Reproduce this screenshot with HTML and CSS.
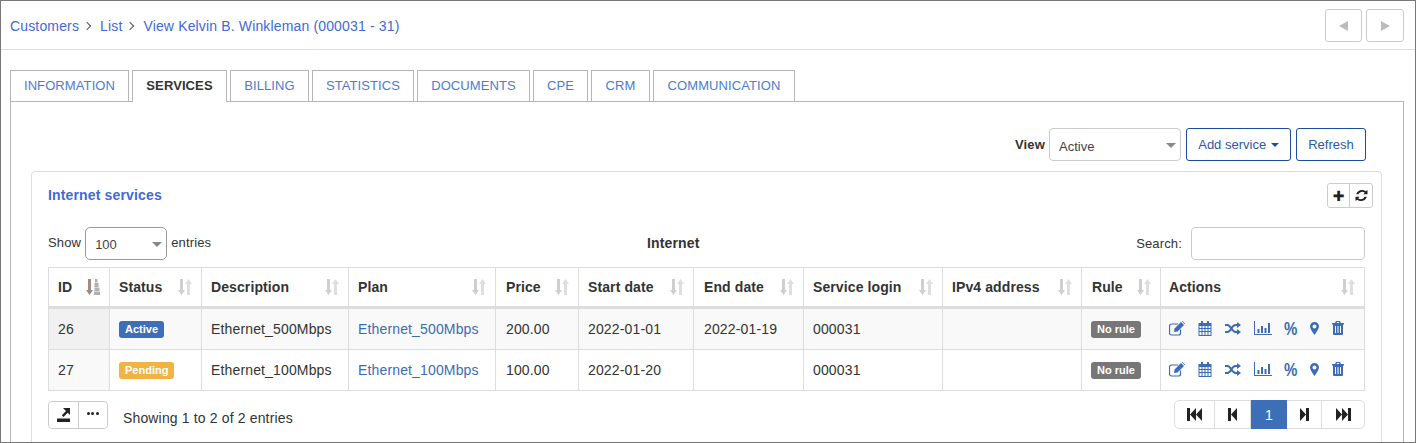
FILE: index.html
```html
<!DOCTYPE html>
<html lang="en">
<head>
	<meta charset="UTF-8">
	<title>View Kelvin B. Winkleman</title>
	<link rel="stylesheet" href="styles.css">
</head>
<body>
<svg class="defs" width="0" height="0">
	<symbol id="i-sort" viewBox="0 0 14 16">
		<path class="sort-a" d="M2 0h3v11h2l-3.500 5-3.500-5h2z"/>
		<path class="sort-b" d="M9 16h3v-11h2l-3.500-5-3.500 5h2z"/>
	</symbol>
	<symbol id="i-sort-id" viewBox="0 0 14 16">
		<path class="sort-c" d="M2 0h3v11h2l-3.500 5-3.500-5h2z"/>
		<path class="sort-d" d="M9 0h2.500v3.500h-2.500zM8.500 4h4v4h-4zM8.500 8.500h5v3.500h-5zM8 12.500h6v3.500h-6z"/>
	</symbol>
	<symbol id="i-edit" viewBox="0 0 16 15">
		<path class="line" d="M11.500 8.500v3.500a2 2 0 0 1-2 2h-7a2 2 0 0 1-2-2v-7a2 2 0 0 1 2-2h6.500"/>
		<path d="M5.500 7.500l6.500-6.500 3 3-6.500 6.500-3.500.5zM12.800.300l.7-.3 2.500 2.500-.3.700z"/>
	</symbol>
	<symbol id="i-cal" viewBox="0 0 14 15">
		<path fill-rule="evenodd" d="M3 0h2v2h4v-2h2v2h2.500v13h-13v-13h2.500zM1.500 5v2h2v-2zM4.500 5v2h2v-2zM7.500 5v2h2v-2zM10.500 5v2h2v-2zM1.500 8v2h2v-2zM4.500 8v2h2v-2zM7.500 8v2h2v-2zM10.500 8v2h2v-2zM1.500 11v3h2v-3zM4.500 11v3h2v-3zM7.500 11v3h2v-3zM10.500 11v3h2v-3z"/>
	</symbol>
	<symbol id="i-random" viewBox="0 0 16 13">
		<path class="cross" d="M0 3h2.500c3.500 0 4 7 8 7h2M0 10h2.500c3.500 0 4-7 8-7h2"/>
		<path d="M12 0l4 3-4 3zM12 7l4 3-4 3z"/>
	</symbol>
	<symbol id="i-chart" viewBox="0 0 18 14">
		<path d="M0 0h1v13h17v1h-18zM3.500 8h2v4h-2zM7 5h2v7h-2zM10.500 7h2v5h-2zM14 2h2v10h-2z"/>
	</symbol>
	<symbol id="i-pin" viewBox="0 0 9 13">
		<path fill-rule="evenodd" d="M4.500 0a4.500 4.500 0 0 1 4.500 4.500c0 2-2.800 6-4.500 8.500-1.700-2.500-4.500-6.500-4.500-8.500a4.500 4.500 0 0 1 4.500-4.500zM4.500 2.500a2 2 0 1 0 0 4 2 2 0 0 0 0-4z"/>
	</symbol>
	<symbol id="i-trash" viewBox="0 0 12 14">
		<path fill-rule="evenodd" d="M4 0h4l1 2h3v1.500h-1v9.500a1 1 0 0 1-1 1h-8a1 1 0 0 1-1-1v-9.500h-1v-1.500h3zM5 1l-.4 1h2.800l-.4-1zM3 5v7h1v-7zM5.500 5v7h1v-7zM8 5v7h1v-7z"/>
	</symbol>
	<symbol id="i-first" viewBox="0 0 15 13">
		<path d="M0 0h3v13h-3zM9 0v13l-6-6.500zM15 0v13l-6-6.500z"/>
	</symbol>
	<symbol id="i-prev" viewBox="0 0 9 13">
		<path d="M0 0h3v13h-3zM9 0v13l-6-6.500z"/>
	</symbol>
	<symbol id="i-next" viewBox="0 0 9 13">
		<path d="M9 0h-3v13h3zM0 0v13l6-6.500z"/>
	</symbol>
	<symbol id="i-last" viewBox="0 0 15 13">
		<path d="M15 0h-3v13h3zM6 0v13l6-6.500zM0 0v13l6-6.500z"/>
	</symbol>
	<symbol id="i-export" viewBox="0 0 13 14">
		<path d="M0 10.500h13v3.500h-13zM6 0h7v7l-2.300-2.300-4.200 4.300-1.700-1.700 4.200-4.300z"/>
	</symbol>
	<symbol id="i-refresh" viewBox="0 0 13 13">
		<path d="M12.500 1v4.200h-4.200l1.500-1.500c-2-1.700-5.300-1-6.300 1.600h-2.300c1-4 6.100-5.800 9.600-3zM.5 12v-4.200h4.200l-1.500 1.500c2 1.700 5.300 1 6.300-1.600h2.300c-1 4-6.100 5.800-9.600 3z"/>
	</symbol>
</svg>

<div class="frame">
	<!-- breadcrumb and prev/next -->
	<div class="topbar">
		<div class="crumbs">
			<a href="#">Customers</a>
			<span class="chev"></span>
			<a href="#">List</a>
			<span class="chev"></span>
			<a href="#">View Kelvin B. Winkleman (000031 - 31)</a>
		</div>
		<div class="pager-btns">
			<button class="nav-btn"><span class="tri-left"></span></button>
			<button class="nav-btn nav-next"><span class="tri-right"></span></button>
		</div>
	</div>

	<ul class="tabs">
		<li class="tab tab-info">Information</li>
		<li class="tab tab-services active">Services</li>
		<li class="tab tab-billing">Billing</li>
		<li class="tab tab-stats">Statistics</li>
		<li class="tab tab-docs">Documents</li>
		<li class="tab tab-cpe">CPE</li>
		<li class="tab tab-crm">CRM</li>
		<li class="tab tab-comm">Communication</li>
	</ul>

	<div class="pane">
		<div class="toolbar">
			<b class="view-label">View</b>
			<div class="select-wrap view-select">
				<select><option>Active</option></select>
			</div>
			<button class="btn btn-add">Add service <span class="caret"></span></button>
			<button class="btn btn-refresh">Refresh</button>
		</div>

		<div class="card">
			<div class="card-head">
				<h3 class="card-title">Internet services</h3>
				<div class="tools">
					<button class="tool-btn"><span class="plus">&#10010;</span></button>
					<button class="tool-btn"><svg class="ico-refresh"><use href="#i-refresh"/></svg></button>
				</div>
			</div>

			<div class="table-top">
				<div class="length">
					<span>Show</span>
					<div class="select-wrap length-select">
						<select><option>100</option></select>
					</div>
					<span>entries</span>
				</div>
				<b class="table-name">Internet</b>
				<div class="search">
					<span>Search:</span>
					<input type="text">
				</div>
			</div>

			<table class="grid">
				<thead>
				<tr>
					<th class="c-id"><div class="th-in">ID<svg class="sort"><use href="#i-sort-id"/></svg></div></th>
					<th class="c-status"><div class="th-in">Status<svg class="sort"><use href="#i-sort"/></svg></div></th>
					<th class="c-desc"><div class="th-in">Description<svg class="sort"><use href="#i-sort"/></svg></div></th>
					<th class="c-plan"><div class="th-in">Plan<svg class="sort"><use href="#i-sort"/></svg></div></th>
					<th class="c-price"><div class="th-in">Price<svg class="sort"><use href="#i-sort"/></svg></div></th>
					<th class="c-start"><div class="th-in">Start date<svg class="sort"><use href="#i-sort"/></svg></div></th>
					<th class="c-end"><div class="th-in">End date<svg class="sort"><use href="#i-sort"/></svg></div></th>
					<th class="c-login"><div class="th-in">Service login<svg class="sort"><use href="#i-sort"/></svg></div></th>
					<th class="c-ip"><div class="th-in">IPv4 address<svg class="sort"><use href="#i-sort"/></svg></div></th>
					<th class="c-rule"><div class="th-in">Rule<svg class="sort"><use href="#i-sort"/></svg></div></th>
					<th class="c-actions"><div class="th-in">Actions<svg class="sort"><use href="#i-sort"/></svg></div></th>
				</tr>
				</thead>
				<tbody>
				<tr class="odd">
					<td class="c-id sorted">26</td>
					<td><span class="badge badge-active">Active</span></td>
					<td>Ethernet_500Mbps</td>
					<td><a href="#">Ethernet_500Mbps</a></td>
					<td class="c-price">200.00</td>
					<td>2022-01-01</td>
					<td class="c-end">2022-01-19</td>
					<td>000031</td>
					<td></td>
					<td><span class="badge badge-rule">No rule</span></td>
					<td class="c-actions">
						<div class="actions">
							<svg class="a-edit"><use href="#i-edit"/></svg>
							<svg class="a-cal"><use href="#i-cal"/></svg>
							<svg class="a-random"><use href="#i-random"/></svg>
							<svg class="a-chart"><use href="#i-chart"/></svg>
							<span class="a-percent">%</span>
							<svg class="a-pin"><use href="#i-pin"/></svg>
							<svg class="a-trash"><use href="#i-trash"/></svg>
						</div>
					</td>
				</tr>
				<tr>
					<td class="c-id sorted">27</td>
					<td><span class="badge badge-pending">Pending</span></td>
					<td>Ethernet_100Mbps</td>
					<td><a href="#">Ethernet_100Mbps</a></td>
					<td class="c-price">100.00</td>
					<td>2022-01-20</td>
					<td class="c-end"></td>
					<td>000031</td>
					<td></td>
					<td><span class="badge badge-rule">No rule</span></td>
					<td class="c-actions">
						<div class="actions">
							<svg class="a-edit"><use href="#i-edit"/></svg>
							<svg class="a-cal"><use href="#i-cal"/></svg>
							<svg class="a-random"><use href="#i-random"/></svg>
							<svg class="a-chart"><use href="#i-chart"/></svg>
							<span class="a-percent">%</span>
							<svg class="a-pin"><use href="#i-pin"/></svg>
							<svg class="a-trash"><use href="#i-trash"/></svg>
						</div>
					</td>
				</tr>
				</tbody>
			</table>

			<div class="table-foot">
				<div class="foot-left">
					<div class="foot-btns">
						<button class="foot-btn"><svg class="ico-export"><use href="#i-export"/></svg></button>
						<button class="foot-btn"><span class="dots"><i></i><i></i><i></i></span></button>
					</div>
					<span class="info">Showing 1 to 2 of 2 entries</span>
				</div>
				<div class="pagination">
					<a class="pg pg-first"><svg class="ico-wide"><use href="#i-first"/></svg></a>
					<a class="pg pg-prev"><svg class="ico-slim"><use href="#i-prev"/></svg></a>
					<a class="pg pg-num current">1</a>
					<a class="pg pg-next"><svg class="ico-slim"><use href="#i-next"/></svg></a>
					<a class="pg pg-last"><svg class="ico-wide"><use href="#i-last"/></svg></a>
				</div>
			</div>
		</div>
	</div>
</div>
</body>
</html>
```

FILE: styles.css
```css
* {
    margin: 0;
    padding: 0;
    box-sizing: border-box;
}

html, body {
    height: 443px;
    overflow: hidden;
}

body {
    font-family: "Liberation Sans", Arial, sans-serif;
    font-size: 14px;
    letter-spacing: 0.15px;
    color: #333;
    background: #fff;
}

a {
    color: #3a6db5;
    text-decoration: none;
}

button {
    font-family: inherit;
    background: #fff;
}

.defs {
    position: absolute;
}

.frame {
    height: 443px;
    border: 1px solid #777;
    overflow: hidden;
}

/* top bar */
.topbar {
    height: 49px;
    padding: 0 11px 0 9px;
    border-bottom: 1px solid #ddd;
    display: flex;
    align-items: center;
    justify-content: space-between;
}

.crumbs {
    display: flex;
    align-items: center;
    margin-top: 2px;
}

.crumbs a {
    color: #3f6ad8;
}

.chev {
    width: 6px;
    height: 6px;
    margin: 0 10px 1px 5px;
    border-top: 1px solid #555;
    border-right: 1px solid #555;
    transform: rotate(45deg);
}

.pager-btns {
    display: flex;
    gap: 4px;
    margin-top: 1px;
}

.nav-btn {
    width: 37px;
    height: 33px;
    border: 1px solid #ccc;
    border-radius: 3px;
    display: flex;
    align-items: center;
    justify-content: center;
}

.nav-next {
    width: 38px;
}

.tri-left {
    border: 5px solid transparent;
    border-left: 0;
    border-right: 9px solid #bbb;
}

.tri-right {
    border: 5px solid transparent;
    border-right: 0;
    border-left: 9px solid #bbb;
}

/* tabs */
.tabs {
    list-style: none;
    display: flex;
    gap: 3px;
    height: 31px;
    margin: 20px 0 0 9px;
}

.tab {
    height: 31px;
    border: 1px solid #b5b5b5;
    border-bottom: 0;
    font-size: 13px;
    letter-spacing: 0.1px;
    line-height: 29px;
    text-align: center;
    text-transform: uppercase;
    color: #4a7dcf;
    background: #fff;
}

.tab.active {
    height: 32px;
    color: #333;
    font-weight: bold;
    position: relative;
    z-index: 1;
}

.tab-info { width: 119px; }
.tab-services { width: 95px; }
.tab-billing { width: 79px; }
.tab-stats { width: 102px; }
.tab-docs { width: 113px; }
.tab-cpe { width: 55px; }
.tab-crm { width: 59px; }
.tab-comm { width: 142px; }

.pane {
    margin: 0 11px 0 9px;
    padding: 26px 21px 0 20px;
    height: 400px;
    border: 1px solid #b5b5b5;
}

.toolbar {
    display: flex;
    align-items: center;
    justify-content: flex-end;
    margin-right: 16px;
    height: 33px;
}

.view-label {
    margin-right: 4px;
    font-size: 13px;
}

.select-wrap {
    position: relative;
}

.select-wrap::after {
    content: "";
    position: absolute;
    right: 5px;
    top: 15px;
    border: 5px solid transparent;
    border-bottom: 0;
    border-top: 5px solid #888;
}

.select-wrap select {
    appearance: none;
    width: 100%;
    height: 100%;
    padding: 2px 9px 0;
    border: 1px solid #ccc;
    border-radius: 4px;
    background: #fff;
    font: 13px "Liberation Sans", Arial, sans-serif;
    color: #444;
}

.view-select {
    width: 132px;
    height: 33px;
}

.view-select select {
    padding-top: 4px;
}

.btn {
    height: 33px;
    border: 1px solid #1c4da1;
    border-radius: 3px;
    color: #2c5aa8;
    font-size: 13px;
}

.btn-add {
    width: 105px;
    margin-left: 5px;
}

.btn-refresh {
    width: 70px;
    margin-left: 5px;
}

.caret {
    display: inline-block;
    margin: 0 0 2px 1px;
    border: 4px solid transparent;
    border-bottom: 0;
    border-top: 4px solid #1c4da1;
}

/* card */
.card {
    margin-top: 10px;
    padding: 0 16px;
    height: 300px;
    border: 1px solid #ddd;
    border-radius: 4px;
}

.card-head {
    display: flex;
    justify-content: space-between;
    height: 55px;
    padding-top: 11px;
}

.card-title {
    font-size: 14px;
    font-weight: bold;
    line-height: 24px;
    color: #3f6ad8;
}

.tools {
    display: flex;
    height: 25px;
    margin-right: -8px;
    border: 1px solid #ccc;
    border-radius: 3px;
}

.tool-btn {
    width: 21px;
    border: 0;
    border-radius: 3px;
    display: flex;
    align-items: center;
    justify-content: center;
}

.tool-btn + .tool-btn {
    width: 23px;
    border-left: 1px solid #ccc;
    border-radius: 0 3px 3px 0;
}

.plus {
    font: 14px "DejaVu Sans", sans-serif;
    color: #222;
}

.ico-refresh {
    width: 13px;
    height: 13px;
    fill: #222;
}

.table-top {
    display: flex;
    align-items: center;
    height: 33px;
    margin-bottom: 7px;
    font-size: 13px;
}

.length {
    display: flex;
    align-items: center;
    width: 599px;
}

.length span {
    margin-top: -3px;
}

.search {
    display: flex;
    align-items: center;
    margin-left: auto;
}

.search span {
    margin-right: 9px;
}

.search input {
    width: 174px;
    height: 33px;
    border: 1px solid #ccc;
    border-radius: 4px;
}

.length-select {
    width: 82px;
    height: 33px;
    margin: 0 4px;
}

.length-select select {
    border-color: #999;
    border-radius: 5px;
}

.table-name {
    font-size: 14px;
    margin-top: -2px;
}

/* table */
.grid {
    width: 1317px;
    table-layout: fixed;
    border-collapse: separate;
    border-spacing: 0;
    border-top: 1px solid #ddd;
    font-size: 14px;
}

.grid th, .grid td {
    border-right: 1px solid #ddd;
    border-bottom: 1px solid #ddd;
    padding: 0 8px 0 9px;
    text-align: left;
}

.grid th:first-child, .grid td:first-child {
    border-left: 1px solid #ddd;
}

.grid th {
    height: 41px;
    border-bottom-width: 3px;
    font-weight: bold;
    letter-spacing: 0.1px;
}

.grid td {
    height: 41px;
}

.grid .c-price, .grid .c-end, .grid th.c-rule {
    padding-left: 10px;
}

.grid .c-actions {
    padding-left: 8px;
}

.odd td {
    background: #f9f9f9;
}

.grid td.sorted {
    background: #f9f9f9;
}

.odd td.sorted {
    background: #f1f1f1;
}

.th-in {
    display: flex;
    align-items: center;
    justify-content: space-between;
}

.sort {
    width: 14px;
    height: 16px;
    margin-right: 1px;
}

.sort-a { fill: #cfcfcf; }
.sort-b { fill: #dedede; }
.sort-c { fill: #9c8c84; }
.sort-d { fill: #b0b0b0; }

.c-id { width: 62px; }
.c-status { width: 92px; }
.c-desc { width: 147px; }
.c-plan { width: 147px; }
.c-price { width: 83px; }
.c-start { width: 115px; }
.c-end { width: 110px; }
.c-login { width: 139px; }
.c-ip { width: 139px; }
.c-rule { width: 79px; }
.c-actions { width: 204px; }

.badge {
    display: inline-block;
    height: 17px;
    padding: 0 6px;
    border-radius: 3px;
    color: #fff;
    font-size: 11px;
    font-weight: bold;
    letter-spacing: 0;
    line-height: 17px;
    vertical-align: middle;
}

.badge-active { background: #3d6fb8; }
.badge-pending { background: #f0b445; }
.badge-rule { background: #777; }

.actions {
    display: flex;
    align-items: center;
    gap: 13px;
    margin-top: -2px;
    fill: #3a6db5;
    color: #3a6db5;
}

.a-edit { width: 16px; height: 15px; }
.a-cal { width: 14px; height: 15px; }
.a-random { width: 16px; height: 13px; }
.a-chart { width: 18px; height: 14px; margin-right: -1px; }
.a-pin { width: 9px; height: 13px; }
.a-trash { width: 12px; height: 14px; }

.line {
    fill: none;
    stroke: #3a6db5;
    stroke-width: 1.2;
}

.cross {
    fill: none;
    stroke: #3a6db5;
    stroke-width: 2;
}

.a-percent {
    width: 13px;
    font-size: 15px;
    font-weight: bold;
    letter-spacing: 0;
    line-height: 15px;
    text-align: center;
    transform: scaleY(1.2);
}

/* footer */
.table-foot {
    display: flex;
    justify-content: space-between;
    margin-top: 9px;
}

.foot-left {
    display: flex;
    align-items: center;
}

.foot-btns {
    display: flex;
    width: 60px;
    height: 28px;
    border: 1px solid #ccc;
    border-radius: 4px;
}

.foot-btn {
    flex: 1;
    border: 0;
    border-radius: 4px;
    display: flex;
    align-items: center;
    justify-content: center;
}

.foot-btn + .foot-btn {
    border-left: 1px solid #ccc;
    border-radius: 0 4px 4px 0;
}

.ico-export {
    width: 13px;
    height: 14px;
    fill: #222;
}

.dots {
    display: flex;
    gap: 1.5px;
    margin-top: -2px;
}

.dots i {
    width: 3px;
    height: 3px;
    border-radius: 50%;
    background: #222;
}

.info {
    margin-left: 15px;
    margin-top: 7px;
}

.pagination {
    display: flex;
    height: 29px;
    border: 1px solid #ddd;
    border-radius: 5px;
}

.pg {
    display: flex;
    align-items: center;
    justify-content: center;
    border-right: 1px solid #ddd;
    fill: #222;
}

.pg-first { width: 40px; }
.pg-prev { width: 36px; }
.pg-num { width: 36px; color: #fff; }
.pg-next { width: 35px; }
.pg-last { width: 42px; border-right: 0; }

.pg.current {
    background: #3d6fb8;
    border-right: 0;
    margin: -1px 0;
}

.ico-wide { width: 15px; height: 13px; }
.ico-slim { width: 9px; height: 13px; }
```
